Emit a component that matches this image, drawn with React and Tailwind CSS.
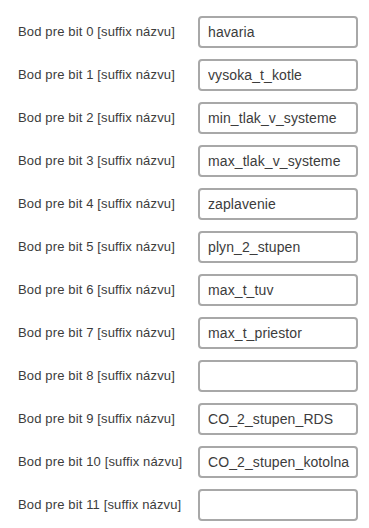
import React from "react";

const rows = [
  "havaria",
  "vysoka_t_kotle",
  "min_tlak_v_systeme",
  "max_tlak_v_systeme",
  "zaplavenie",
  "plyn_2_stupen",
  "max_t_tuv",
  "max_t_priestor",
  "",
  "CO_2_stupen_RDS",
  "CO_2_stupen_kotolna",
  "",
];

export default function App() {
  return (
    <div className="w-[369px] h-[528px] bg-white pt-[10px] font-['Liberation_Sans',Arial,sans-serif] text-[#3c3c3c]">
      {rows.map((value, i) => (
        <div key={i} className="flex items-center h-[43px]">
          <label className="w-[198px] pl-[18px] text-[13px] tracking-[0.14px] leading-none">
            Bod pre bit {i} [suffix názvu]
          </label>
          <input
            type="text"
            defaultValue={value}
            className="w-[160px] h-[32px] border-2 border-[#a8a8a8] rounded-[4px] pl-[8px] text-[14px] tracking-[0.1px] text-[#3c3c3c] outline-none bg-white"
          />
        </div>
      ))}
    </div>
  );
}
